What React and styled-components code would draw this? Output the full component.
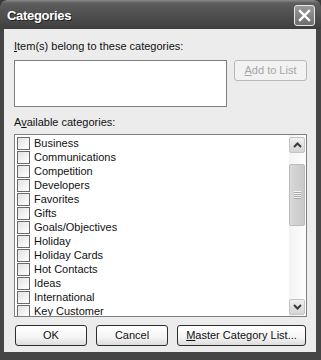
import React from 'react'
import styled, { createGlobalStyle } from 'styled-components'

const GlobalStyle = createGlobalStyle`
    html, body {
        margin: 0;
        padding: 0;
        background: #3a3a3a;
    }
    * { box-sizing: border-box; }
`

//Outer window frame - dark border round the dialog
const Window = styled.div`
    width: 321px;
    height: 360px;
    display: flex;
    flex-direction: column;
    background: #454545;
    border-radius: 7px 7px 0 0;
    padding: 0 5px 8px 4px;
    font-family: "Liberation Sans", Arial, sans-serif;
    font-size: 11px;
    color: #111;
    overflow: hidden;
`

const TitleBar = styled.div`
    height: 29px;
    flex: none;
    display: flex;
    align-items: center;
    justify-content: space-between;
    margin: 0 -5px 0 -4px;
    padding: 0 6px 0 7px;
    background: linear-gradient(180deg, #8a8a8a 0px, #5e5e5e 3px, #525252 12px, #474747 22px, #3e3e3e 29px);
    border-radius: 7px 7px 0 0;
`

const Title = styled.span`
    color: #fff;
    font-family: "Liberation Sans", Arial, sans-serif;
    font-weight: bold;
    font-size: 13px;
    letter-spacing: -0.3px;
    text-shadow: 1px 1px 0 #222;
    padding-top: 1px;
`

const CloseBtn = styled.div`
    width: 21px;
    height: 21px;
    border: 1px solid #e8e8e8;
    border-radius: 3px;
    background: linear-gradient(180deg, #9a9a9a, #6e6e6e);
    display: flex;
    align-items: center;
    justify-content: center;
    margin-top: 2px;
`

const Body = styled.div`
    flex: 1;
    background: #ececec;
    padding: 10px 9px 0 10px;
    display: flex;
    flex-direction: column;
`

const Label = styled.div`
    height: 14px;
    line-height: 14px;
    white-space: nowrap;
`

const Key = styled.span`
    text-decoration: underline;
    text-underline-offset: 1px;
`

const TopRow = styled.div`
    display: flex;
    gap: 7px;
    margin-top: 7px;
    height: 47px;
`

const TextBox = styled.div`
    width: 213px;
    height: 47px;
    background: #fff;
    border: 1px solid #7f7f7f;
`

const Button = styled.div`
    height: 21px;
    width: ${p => p.$w}px;
    border: 1px solid ${p => (p.$disabled ? '#b8b8b8' : '#2e2e2e')};
    border-radius: 3px;
    background: ${p => (p.$disabled ? '#f2f2f2' : 'linear-gradient(180deg, #ffffff 0%, #f4f4f4 60%, #dcdcdc 100%)')};
    color: ${p => (p.$disabled ? '#a6a6a6' : '#111')};
    display: flex;
    align-items: center;
    justify-content: center;
    white-space: nowrap;
    padding-bottom: 1px;
`

const AvailLabel = styled(Label)`
    margin-top: 8px;
`

const ListBox = styled.div`
    margin-top: 5px;
    height: 183px;
    border: 1px solid #7f7f7f;
    background: #fff;
    display: flex;
    overflow: hidden;
`

const Items = styled.div`
    flex: 1;
    padding: 1px 0 0 2px;
    overflow: hidden;
`

const Item = styled.div`
    height: 14px;
    display: flex;
    align-items: center;
    gap: 4px;
    white-space: nowrap;
`

const Check = styled.span`
    width: 13px;
    height: 13px;
    flex: none;
    border: 1px solid #6b6b6b;
    background: linear-gradient(135deg, #e2e2e2 0%, #f4f4f4 60%, #ffffff 100%);
`

const ScrollBar = styled.div`
    width: 17px;
    flex: none;
    padding: 2px 1px 1px 0;
    display: flex;
    flex-direction: column;
    background: linear-gradient(90deg, #f3f3f3, #fdfdfd);
`

const Arrow = styled.div`
    height: 16px;
    border: 1px solid #c4c4c4;
    border-radius: 2px;
    background: linear-gradient(180deg, #f0f0f0, #d4d4d4);
    display: flex;
    align-items: center;
    justify-content: center;
`

const Thumb = styled.div`
    margin-top: 11px;
    height: 62px;
    border: 1px solid #bcbcbc;
    border-radius: 2px;
    background: linear-gradient(90deg, #dadada, #d0d0d0 50%, #c8c8c8);
    display: flex;
    align-items: center;
    justify-content: center;
`

const Grip = styled.div`
    width: 7px;
    height: 8px;
    background: repeating-linear-gradient(180deg, #f5f5f5 0 1px, #a8a8a8 1px 2px);
`

const Spacer = styled.div`
    flex: 1;
`

const ButtonRow = styled.div`
    display: flex;
    margin-top: 8px;
    padding-left: 1px;
    gap: 9px;
`

const categories = [
    'Business', 'Communications', 'Competition', 'Developers', 'Favorites',
    'Gifts', 'Goals/Objectives', 'Holiday', 'Holiday Cards', 'Hot Contacts',
    'Ideas', 'International', 'Key Customer'
]

export default function App() {
    return (
        <>
            <GlobalStyle />
            <Window>
                <TitleBar>
                    <Title>Categories</Title>
                    <CloseBtn>
                        <svg width="13" height="13" viewBox="0 0 13 13">
                            <path d="M2 2 L11 11 M11 2 L2 11" stroke="#fff" strokeWidth="2.4" strokeLinecap="square" />
                        </svg>
                    </CloseBtn>
                </TitleBar>
                <Body>
                    <Label><Key>I</Key>tem(s) belong to these categories:</Label>
                    <TopRow>
                        <TextBox />
                        <Button $w={73} $disabled><Key>A</Key>dd to List</Button>
                    </TopRow>
                    <AvailLabel>A<Key>v</Key>ailable categories:</AvailLabel>
                    <ListBox>
                        <Items>
                            {categories.map(c => (
                                <Item key={c}><Check />{c}</Item>
                            ))}
                        </Items>
                        <ScrollBar>
                            <Arrow>
                                <svg width="9" height="6" viewBox="0 0 9 6">
                                    <path d="M1 5 L4.5 1.5 L8 5" fill="none" stroke="#3a3a3a" strokeWidth="2" />
                                </svg>
                            </Arrow>
                            <Thumb><Grip /></Thumb>
                            <Spacer />
                            <Arrow>
                                <svg width="9" height="6" viewBox="0 0 9 6">
                                    <path d="M1 1 L4.5 4.5 L8 1" fill="none" stroke="#3a3a3a" strokeWidth="2" />
                                </svg>
                            </Arrow>
                        </ScrollBar>
                    </ListBox>
                    <ButtonRow>
                        <Button $w={72}>OK</Button>
                        <Button $w={72}>Cancel</Button>
                        <Button $w={129}><Key>M</Key>aster Category List...</Button>
                    </ButtonRow>
                </Body>
            </Window>
        </>
    )
}
